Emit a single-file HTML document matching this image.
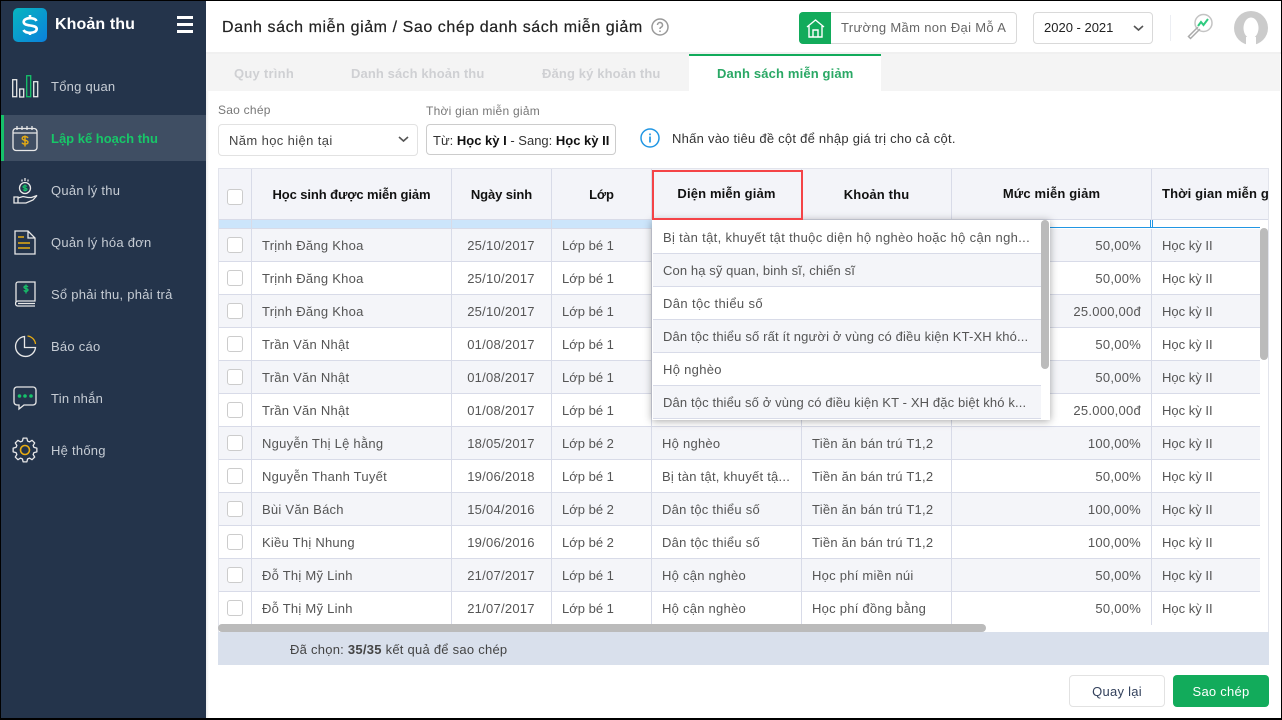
<!DOCTYPE html>
<html lang="vi"><head><meta charset="utf-8"><title>Khoản thu</title>
<style>
*{box-sizing:border-box}
html,body{margin:0;padding:0;width:1282px;height:720px;overflow:hidden;background:#fff}
body{font-family:"Liberation Sans",sans-serif;font-size:13px;color:#444;position:relative}
.a{position:absolute;white-space:nowrap}
.t{position:absolute;white-space:nowrap;line-height:18px;letter-spacing:.25px}
#side{position:absolute;left:1px;top:1px;width:205px;height:718px;background:#24344b}
.mi{position:absolute;left:51px;color:#c6ccd4;font-size:13px;line-height:18px;white-space:nowrap;letter-spacing:.25px}
.row{position:absolute;left:219px;width:1041px;height:33px;border-bottom:1px solid #d8dbe8;overflow:hidden}
.row.g{background:#f4f5f9}.row.w{background:#fff}
.row i{position:absolute;top:0;bottom:0;width:1px;background:#d8dbe8}
.row span{position:absolute;top:8px;line-height:18px;white-space:nowrap;color:#555;letter-spacing:.25px}
.cb{position:absolute;left:8px;top:8px;width:16px;height:16px;border:1px solid #ccc;border-radius:3px;background:#fff}
.n{left:43px}.d{left:232px;width:100px;text-align:center}.row span.l{left:343px;letter-spacing:0}.x{left:443px}.k{left:593px}.m{left:733px;width:189px;text-align:right}.row span.h{left:943px;letter-spacing:0}
.th{position:absolute;top:169px;height:50px;background:#f3f4f9;border-right:1px solid #d8dbe8;text-align:center;color:#111;font-weight:bold;font-size:13px;line-height:50px;white-space:nowrap;overflow:hidden;letter-spacing:.15px}
.dd{position:absolute;left:653px;width:388px;height:33px;border-bottom:1px solid #d8dbe8;padding:8px 10px 0;line-height:18px;white-space:nowrap;color:#555;letter-spacing:.25px;overflow:hidden}
</style></head><body>
<div class="a" style="left:0;top:0;width:1282px;height:720px;border:1px solid #000;border-bottom-width:2px;z-index:50;pointer-events:none"></div>

<div id="side"></div>
<svg class="a" style="left:13px;top:8px" width="34" height="34" viewBox="0 0 34 34"><defs><linearGradient id="g" x1="0" y1="0" x2="1" y2="1"><stop offset="0" stop-color="#08b6bf"/><stop offset="1" stop-color="#0a80dc"/></linearGradient></defs><rect width="34" height="34" rx="5" fill="url(#g)"/><path d="M23.500 13c-.8-1.800-3.300-2.800-6.500-2.800-3.700 0-6.300 1.500-6.300 3.800 0 5 13 2 13 7 0 2.300-2.700 3.800-6.500 3.800-3.300 0-5.800-1-6.700-2.800M17 7v3.200M17 23.800V27" fill="none" stroke="#fff" stroke-width="2.600"/></svg>
<div class="a" style="left:55px;top:15px;color:#fff;font-weight:bold;font-size:16px;line-height:20px;letter-spacing:.1px">Khoản thu</div>
<div class="a" style="left:177px;top:16px;width:16px;height:3px;background:#fff"></div>
<div class="a" style="left:177px;top:23px;width:16px;height:3px;background:#fff"></div>
<div class="a" style="left:177px;top:30px;width:16px;height:3px;background:#fff"></div>
<div class="a" style="left:1px;top:115px;width:205px;height:46px;background:#3f4e63"></div>
<div class="a" style="left:1px;top:115px;width:3px;height:46px;background:#16c26a"></div>

<svg class="a" style="left:12px;top:75px" width="27" height="23" fill="none" stroke="#e8e8e8" stroke-width="1.300"><rect x=".7" y="4.700" width="4" height="17"/><rect x="7.700" y="14" width="4" height="8"/><rect x="14.700" y=".7" width="4" height="21" stroke="#16c26a"/><rect x="21.700" y="6.700" width="4" height="15"/></svg>
<div class="mi" style="top:78px">Tổng quan</div>
<svg class="a" style="left:12px;top:125px" width="27" height="27" fill="none" stroke="#e8e8e8" stroke-width="1.300"><rect x="1" y="3.500" width="24" height="22" rx="3"/><path d="M1 8h24M5 1v4M10 1v4M15 1v4M20 1v4"/><path d="M16 13c-.5-1-1.500-1.400-3-1.400-1.600 0-2.800.7-2.800 1.900 0 2.500 5.800 1.200 5.800 3.600 0 1.200-1.200 1.900-3 1.900-1.500 0-2.600-.5-3-1.400M13 10.500v11" stroke="#e8ac12" stroke-width="1.400"/></svg>
<div class="mi" style="top:130px;color:#17c768;font-weight:bold;letter-spacing:0">Lập kế hoạch thu</div>
<svg class="a" style="left:13px;top:177px" width="26" height="27" fill="none" stroke="#e8e8e8" stroke-width="1.300"><circle cx="12" cy="11" r="5.500"/><path d="M12 1v3M9 2.500v2M15 2.500v2"/><path d="M14 9.500c-.5-.6-1-.8-2-.8-1.200 0-2 .5-2 1.200 0 1.700 4 .7 4 2.300 0 .8-.8 1.200-2 1.200-1 0-1.700-.3-2-.9M12 7.500v7" stroke="#16c26a" stroke-width="1.200"/><path d="M1 20h4v6H1zM5 21l5-1.500 5 1h3.500l5.500-2-4 4.500-7 3H5"/></svg>
<div class="mi" style="top:182px">Quản lý thu</div>
<svg class="a" style="left:14px;top:230px" width="22" height="25" fill="none" stroke="#e8e8e8" stroke-width="1.300"><path d="M1 1h13l7 7v16H1zM14 1v7h7"/><path d="M4 7h6M4 13h12M4 18h12" stroke="#e8ac12" stroke-width="1.500"/></svg>
<div class="mi" style="top:234px">Quản lý hóa đơn</div>
<svg class="a" style="left:15px;top:281px" width="21" height="26" fill="none" stroke="#e8e8e8" stroke-width="1.300"><path d="M1 21V3a2 2 0 0 1 2-2h17v19H3a2 2 0 0 0 0 5h17M3 22.500h17"/><path d="M13 6c-.4-.7-1-1-2-1-1.200 0-2 .5-2 1.300 0 1.900 4 .8 4 2.600 0 .9-.8 1.400-2 1.400-1 0-1.800-.4-2.100-1.100M11 3.500v9" stroke="#16c26a" stroke-width="1.300"/></svg>
<div class="mi" style="top:286px">Sổ phải thu, phải trả</div>
<svg class="a" style="left:14px;top:335px" width="23" height="23" fill="none" stroke="#e8e8e8" stroke-width="1.300"><path d="M10.500 1.500a10 10 0 1 0 11 11h-11z"/><path d="M13.500 1a9 9 0 0 1 8 8" stroke="#e8ac12"/></svg>
<div class="mi" style="top:338px">Báo cáo</div>
<svg class="a" style="left:13px;top:386px" width="24" height="25" fill="none" stroke="#e8e8e8" stroke-width="1.300"><path d="M4 1h16a3 3 0 0 1 3 3v12a3 3 0 0 1-3 3H11l-5 4v-4H4a3 3 0 0 1-3-3V4a3 3 0 0 1 3-3z"/><circle cx="6.500" cy="10" r="1.800" fill="#16c26a" stroke="none"/><circle cx="12" cy="10" r="1.800" fill="#16c26a" stroke="none"/><circle cx="18" cy="10" r="1.800" fill="#16c26a" stroke="none"/></svg>
<div class="mi" style="top:390px">Tin nhắn</div>
<svg class="a" style="left:12px;top:437px" width="26" height="26" viewBox="0 0 26 26" fill="none" stroke="#e8e8e8" stroke-width="1.300" stroke-linejoin="round"><polygon points="15.570,4.060 14.870,1.140 11.130,1.140 10.430,4.060 8.490,4.870 5.950,3.290 3.290,5.950 4.870,8.490 4.060,10.430 1.140,11.130 1.140,14.870 4.060,15.570 4.870,17.510 3.290,20.050 5.950,22.710 8.490,21.130 10.430,21.940 11.130,24.860 14.870,24.860 15.570,21.940 17.510,21.130 20.050,22.710 22.710,20.050 21.130,17.510 21.940,15.570 24.860,14.870 24.860,11.130 21.940,10.430 21.130,8.490 22.710,5.950 20.050,3.290 17.510,4.870"/><circle cx="13" cy="13" r="4.500" stroke="#e8ac12" stroke-width="1.600"/></svg>
<div class="mi" style="top:442px">Hệ thống</div>

<div class="a" style="left:222px;top:18px;font-size:16px;line-height:20px;color:#222;letter-spacing:.57px;-webkit-text-stroke:.2px #222">Danh sách miễn giảm / Sao chép danh sách miễn giảm</div>
<svg class="a" style="left:651px;top:18px" width="18" height="18" fill="none" stroke="#999" stroke-width="1.500"><circle cx="9" cy="9" r="8"/><path d="M6.500 7a2.500 2.500 0 1 1 3.500 2.300c-.7.300-1 .8-1 1.700" /><path d="M9 12.500v1.500"/></svg>

<div class="a" style="left:799px;top:12px;width:218px;height:32px;border:1px solid #d9d9d9;border-radius:4px"></div>
<div class="a" style="left:799px;top:12px;width:32px;height:32px;background:#12ab5b;border-radius:4px 0 0 4px"></div>
<svg class="a" style="left:806px;top:19px" width="19" height="19" fill="none" stroke="#fff" stroke-width="1.400"><path d="M1 8l8.500-7L18 8M3 7v11h13V7M7 18v-7h5v7M7 11h5"/></svg>
<div class="t" style="left:841px;top:19px;color:#666;letter-spacing:.33px">Trường Mầm non Đại Mỗ A</div>
<div class="a" style="left:1033px;top:12px;width:120px;height:32px;border:1px solid #d9d9d9;border-radius:4px"></div>
<div class="t" style="left:1044px;top:19px;color:#222;letter-spacing:0">2020 - 2021</div>
<svg class="a" style="left:1133px;top:25px" width="11" height="7" fill="none" stroke="#555" stroke-width="1.600"><path d="M1 1l4.500 4L10 1"/></svg>
<div class="a" style="left:1170px;top:15px;width:1px;height:26px;background:#eceef3"></div>
<svg class="a" style="left:1186px;top:13px" width="28" height="28" fill="none"><circle cx="17.500" cy="10" r="8.500" stroke="#c4c4c4" stroke-width="1.500"/><path d="M12 14l-9.500 9.500 2 2L14 16" stroke="#aaa" stroke-width="1.500"/><path d="M12 13l3-4 2.500 3L22 6" stroke="#2ecb7f" stroke-width="2"/></svg>
<svg class="a" style="left:1234px;top:11px" width="34" height="34"><circle cx="17" cy="17" r="17" fill="#cbcbcb"/><ellipse cx="17" cy="17" rx="7.500" ry="10.500" fill="#fff"/><rect x="12" y="26" width="10" height="8" fill="#fff"/></svg>

<div class="a" style="left:206px;top:54px;width:483px;height:37px;background:#f4f4f4"></div>
<div class="a" style="left:881px;top:54px;width:399px;height:37px;background:#f4f4f4"></div>
<div class="a" style="left:206px;top:52px;width:1075px;height:2px;background:#f0f0f0"></div>
<div class="a" style="left:689px;top:54px;width:192px;height:2px;background:#12ab5b"></div>
<div class="t" style="left:234px;top:65px;color:#cfd0d3;font-weight:bold">Quy trình</div>
<div class="t" style="left:351px;top:65px;color:#cfd0d3;font-weight:bold;letter-spacing:.1px">Danh sách khoản thu</div>
<div class="t" style="left:542px;top:65px;color:#cfd0d3;font-weight:bold;letter-spacing:.13px">Đăng ký khoản thu</div>
<div class="t" style="left:717px;top:65px;color:#2aa865;font-weight:bold;letter-spacing:.15px">Danh sách miễn giảm</div>
<div class="a" style="left:206px;top:91px;width:3px;height:628px;background:linear-gradient(90deg,#ececec,#fff)"></div>

<div class="t" style="left:218px;top:101px;font-size:12px;color:#777">Sao chép</div>
<div class="t" style="left:426px;top:102px;font-size:12px;color:#777">Thời gian miễn giảm</div>
<div class="a" style="left:218px;top:124px;width:200px;height:32px;border:1px solid #e2e2e2;border-radius:4px"></div>
<div class="t" style="left:229px;top:132px;color:#444;letter-spacing:.38px">Năm học hiện tại</div>
<svg class="a" style="left:398px;top:136px" width="11" height="7" fill="none" stroke="#555" stroke-width="1.600"><path d="M1 1l4.500 4L10 1"/></svg>
<div class="a" style="left:426px;top:124px;width:190px;height:31px;border:1px solid #ccc;border-radius:4px"></div>
<div class="t" style="left:433px;top:132px;color:#333;letter-spacing:0">Từ: <b style="color:#111">Học kỳ I</b> - Sang: <b style="color:#111">Học kỳ II</b></div>
<svg class="a" style="left:640px;top:128px" width="20" height="20" fill="none" stroke="#2196e3"><circle cx="10" cy="10" r="9" stroke-width="1.500"/><path d="M10 8.500v6M10 5.500v1.800" stroke-width="1.700"/></svg>
<div class="t" style="left:672px;top:130px;color:#333;letter-spacing:.25px">Nhấn vào tiêu đề cột để nhập giá trị cho cả cột.</div>

<div class="a" style="left:218px;top:168px;width:1051px;height:464px;border:1px solid #e2e4ec;border-bottom:0"></div>
<div class="th" style="left:219px;width:33px"></div>
<div class="a" style="left:227px;top:189px;width:16px;height:16px;border:1px solid #ccc;border-radius:3px;background:#fff"></div>
<div class="th" style="left:252px;width:200px;line-height:52px;letter-spacing:-.1px">Học sinh được miễn giảm</div>
<div class="th" style="left:452px;width:100px;line-height:52px;letter-spacing:-.1px">Ngày sinh</div>
<div class="th" style="left:552px;width:100px;line-height:52px;letter-spacing:-.1px">Lớp</div>
<div class="th" style="left:652px;width:150px">Diện miễn giảm</div>
<div class="th" style="left:802px;width:150px;line-height:52px">Khoản thu</div>
<div class="th" style="left:952px;width:200px">Mức miễn giảm</div>
<div class="th" style="left:1152px;width:116px;text-align:left;padding-left:10px;border-right:0">Thời gian miễn giảm</div>
<div class="a" style="left:219px;top:219px;width:1049px;height:1px;background:#d8dbe8"></div>
<div class="a" style="left:219px;top:220px;width:433px;height:9px;background:#cce5fb;border-bottom:1px solid #d8dbe8"></div>
<div class="a" style="left:251px;top:220px;width:1px;height:9px;background:#d8dbe8"></div>
<div class="a" style="left:451px;top:220px;width:1px;height:9px;background:#d8dbe8"></div>
<div class="a" style="left:551px;top:220px;width:1px;height:9px;background:#d8dbe8"></div>
<div class="a" style="left:1050px;top:227px;width:210px;height:1px;background:#2196e3"></div>
<div class="a" style="left:1150px;top:220px;width:1px;height:8px;background:#2196e3"></div>
<div class="a" style="left:1152px;top:220px;width:1px;height:8px;background:#2196e3"></div>

<div class="row g" style="top:229px;height:33px"><b class="cb"></b><i style="left:32px"></i><i style="left:232px"></i><i style="left:332px"></i><i style="left:432px"></i><i style="left:582px"></i><i style="left:732px"></i><i style="left:932px"></i><span class="n">Trịnh Đăng Khoa</span><span class="d">25/10/2017</span><span class="l">Lớp bé 1</span><span class="m">50,00%</span><span class="h">Học kỳ II</span></div>
<div class="row w" style="top:262px"><b class="cb"></b><i style="left:32px"></i><i style="left:232px"></i><i style="left:332px"></i><i style="left:432px"></i><i style="left:582px"></i><i style="left:732px"></i><i style="left:932px"></i><span class="n">Trịnh Đăng Khoa</span><span class="d">25/10/2017</span><span class="l">Lớp bé 1</span><span class="m">50,00%</span><span class="h">Học kỳ II</span></div>
<div class="row g" style="top:295px"><b class="cb"></b><i style="left:32px"></i><i style="left:232px"></i><i style="left:332px"></i><i style="left:432px"></i><i style="left:582px"></i><i style="left:732px"></i><i style="left:932px"></i><span class="n">Trịnh Đăng Khoa</span><span class="d">25/10/2017</span><span class="l">Lớp bé 1</span><span class="m">25.000,00đ</span><span class="h">Học kỳ II</span></div>
<div class="row w" style="top:328px"><b class="cb"></b><i style="left:32px"></i><i style="left:232px"></i><i style="left:332px"></i><i style="left:432px"></i><i style="left:582px"></i><i style="left:732px"></i><i style="left:932px"></i><span class="n">Trần Văn Nhật</span><span class="d">01/08/2017</span><span class="l">Lớp bé 1</span><span class="m">50,00%</span><span class="h">Học kỳ II</span></div>
<div class="row g" style="top:361px"><b class="cb"></b><i style="left:32px"></i><i style="left:232px"></i><i style="left:332px"></i><i style="left:432px"></i><i style="left:582px"></i><i style="left:732px"></i><i style="left:932px"></i><span class="n">Trần Văn Nhật</span><span class="d">01/08/2017</span><span class="l">Lớp bé 1</span><span class="m">50,00%</span><span class="h">Học kỳ II</span></div>
<div class="row w" style="top:394px"><b class="cb"></b><i style="left:32px"></i><i style="left:232px"></i><i style="left:332px"></i><i style="left:432px"></i><i style="left:582px"></i><i style="left:732px"></i><i style="left:932px"></i><span class="n">Trần Văn Nhật</span><span class="d">01/08/2017</span><span class="l">Lớp bé 1</span><span class="m">25.000,00đ</span><span class="h">Học kỳ II</span></div>
<div class="row g" style="top:427px"><b class="cb"></b><i style="left:32px"></i><i style="left:232px"></i><i style="left:332px"></i><i style="left:432px"></i><i style="left:582px"></i><i style="left:732px"></i><i style="left:932px"></i><span class="n">Nguyễn Thị Lệ hằng</span><span class="d">18/05/2017</span><span class="l">Lớp bé 2</span><span class="x">Hộ nghèo</span><span class="k">Tiền ăn bán trú T1,2</span><span class="m">100,00%</span><span class="h">Học kỳ II</span></div>
<div class="row w" style="top:460px"><b class="cb"></b><i style="left:32px"></i><i style="left:232px"></i><i style="left:332px"></i><i style="left:432px"></i><i style="left:582px"></i><i style="left:732px"></i><i style="left:932px"></i><span class="n">Nguyễn Thanh Tuyết</span><span class="d">19/06/2018</span><span class="l">Lớp bé 1</span><span class="x">Bị tàn tật, khuyết tậ...</span><span class="k">Tiền ăn bán trú T1,2</span><span class="m">50,00%</span><span class="h">Học kỳ II</span></div>
<div class="row g" style="top:493px"><b class="cb"></b><i style="left:32px"></i><i style="left:232px"></i><i style="left:332px"></i><i style="left:432px"></i><i style="left:582px"></i><i style="left:732px"></i><i style="left:932px"></i><span class="n">Bùi Văn Bách</span><span class="d">15/04/2016</span><span class="l">Lớp bé 2</span><span class="x">Dân tộc thiểu số</span><span class="k">Tiền ăn bán trú T1,2</span><span class="m">100,00%</span><span class="h">Học kỳ II</span></div>
<div class="row w" style="top:526px"><b class="cb"></b><i style="left:32px"></i><i style="left:232px"></i><i style="left:332px"></i><i style="left:432px"></i><i style="left:582px"></i><i style="left:732px"></i><i style="left:932px"></i><span class="n">Kiều Thị Nhung</span><span class="d">19/06/2016</span><span class="l">Lớp bé 2</span><span class="x">Dân tộc thiểu số</span><span class="k">Tiền ăn bán trú T1,2</span><span class="m">100,00%</span><span class="h">Học kỳ II</span></div>
<div class="row g" style="top:559px"><b class="cb"></b><i style="left:32px"></i><i style="left:232px"></i><i style="left:332px"></i><i style="left:432px"></i><i style="left:582px"></i><i style="left:732px"></i><i style="left:932px"></i><span class="n">Đỗ Thị Mỹ Linh</span><span class="d">21/07/2017</span><span class="l">Lớp bé 1</span><span class="x">Hộ cận nghèo</span><span class="k">Học phí miền núi</span><span class="m">50,00%</span><span class="h">Học kỳ II</span></div>
<div class="row w" style="top:592px;border-bottom:0"><b class="cb"></b><i style="left:32px"></i><i style="left:232px"></i><i style="left:332px"></i><i style="left:432px"></i><i style="left:582px"></i><i style="left:732px"></i><i style="left:932px"></i><span class="n">Đỗ Thị Mỹ Linh</span><span class="d">21/07/2017</span><span class="l">Lớp bé 1</span><span class="x">Hộ cận nghèo</span><span class="k">Học phí đồng bằng</span><span class="m">50,00%</span><span class="h">Học kỳ II</span></div>

<div class="a" style="left:1260px;top:228px;width:8px;height:132px;background:#bbb;border-radius:4px"></div>
<div class="a" style="left:218px;top:624px;width:768px;height:8px;background:#bbb;border-radius:4px"></div>
<div class="a" style="left:218px;top:632px;width:1051px;height:33px;background:#d9e0ec"></div>
<div class="t" style="left:290px;top:641px;color:#444">Đã chọn: <b>35/35</b> kết quả để sao chép</div>

<div class="a" style="left:652px;top:220px;width:398px;height:200px;background:#fff;box-shadow:0 1px 8px rgba(0,0,0,.35)"></div>
<div class="dd" style="top:221px;background:#fff;letter-spacing:.33px">Bị tàn tật, khuyết tật thuộc diện hộ nghèo hoặc hộ cận ngh...</div>
<div class="dd" style="top:254px;background:#f4f5f9;letter-spacing:.1px">Con hạ sỹ quan, binh sĩ, chiến sĩ</div>
<div class="dd" style="top:287px;background:#fff;letter-spacing:.38px">Dân tộc thiểu số</div>
<div class="dd" style="top:320px;background:#f4f5f9;letter-spacing:.15px">Dân tộc thiểu số rất ít người ở vùng có điều kiện KT-XH khó...</div>
<div class="dd" style="top:353px;background:#fff;letter-spacing:.3px">Hộ nghèo</div>
<div class="dd" style="top:386px;background:#f4f5f9;letter-spacing:.13px">Dân tộc thiểu số ở vùng có điều kiện KT - XH đặc biệt khó k...</div>
<div class="a" style="left:1041px;top:220px;width:8px;height:149px;background:#bbb;border-radius:4px"></div>
<div class="a" style="left:652px;top:170px;width:151px;height:50px;border:2px solid #f44347"></div>

<div class="a" style="left:1069px;top:675px;width:96px;height:32px;border:1px solid #e2e2e2;border-radius:4px;text-align:center;line-height:31px;color:#33415c;letter-spacing:.25px">Quay lại</div>
<div class="a" style="left:1173px;top:675px;width:96px;height:32px;background:#12ab5b;border-radius:4px;text-align:center;line-height:33px;color:#fff;letter-spacing:.25px">Sao chép</div>
</body></html>
